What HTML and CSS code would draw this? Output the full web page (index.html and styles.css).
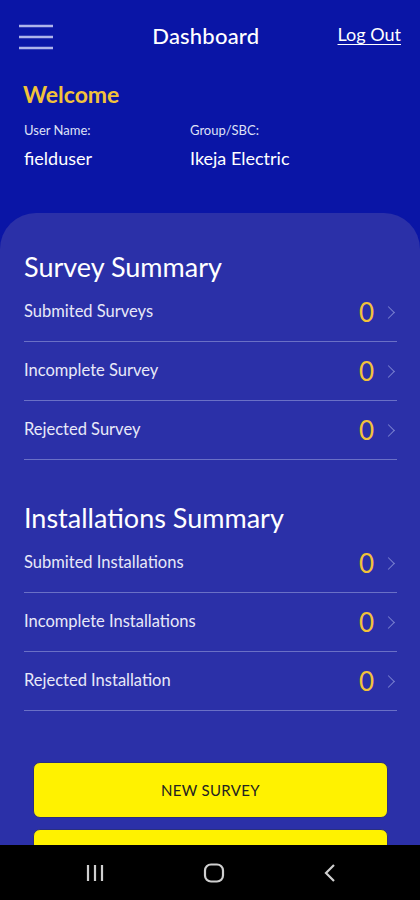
FILE: index.html
```html
<!DOCTYPE html>
<html lang="en">
<head>
    <meta charset="UTF-8">
    <meta name="viewport" content="width=device-width, initial-scale=1.0">
    <title>Dashboard</title>
    <link rel="stylesheet" href="styles.css">
</head>
<body>
    <header class="topbar">
        <button class="menu" aria-label="Menu">
            <svg width="36" height="26" viewBox="0 0 36 26"><g stroke="#aeb3ea" stroke-width="2.4"><line x1="1" y1="2" x2="35" y2="2"/><line x1="1" y1="13" x2="35" y2="13"/><line x1="1" y1="24" x2="35" y2="24"/></g></svg>
        </button>
        <h1>Dashboard</h1>
        <a class="logout" href="#">Log Out</a>
    </header>

    <section class="welcome">
        <h2>Welcome</h2>
        <div class="info">
            <div>
                <span class="label">User Name:</span>
                <span class="value">fielduser</span>
            </div>
            <div>
                <span class="label">Group/SBC:</span>
                <span class="value">Ikeja Electric</span>
            </div>
        </div>
    </section>

    <main class="card">
        <h3>Survey Summary</h3>
        <ul class="summary">
            <li><span>Submited Surveys</span><b>0</b><i class="chev"></i></li>
            <li><span>Incomplete Survey</span><b>0</b><i class="chev"></i></li>
            <li><span>Rejected Survey</span><b>0</b><i class="chev"></i></li>
        </ul>

        <h3>Installations Summary</h3>
        <ul class="summary">
            <li><span>Submited Installations</span><b>0</b><i class="chev"></i></li>
            <li><span>Incomplete Installations</span><b>0</b><i class="chev"></i></li>
            <li><span>Rejected Installation</span><b>0</b><i class="chev"></i></li>
        </ul>

        <div class="actions">
            <button class="btn">NEW SURVEY</button>
            <button class="btn">NEW INSTALLATION</button>
        </div>
    </main>

    <nav class="sysnav">
        <svg width="20" height="18" viewBox="0 0 20 18"><g stroke="#cfcfcf" stroke-width="2.2"><line x1="3" y1="1" x2="3" y2="17"/><line x1="10" y1="1" x2="10" y2="17"/><line x1="17" y1="1" x2="17" y2="17"/></g></svg>
        <svg width="22" height="20" viewBox="0 0 22 20"><rect x="2" y="1.5" width="18" height="17" rx="6" fill="none" stroke="#cfcfcf" stroke-width="2.2"/></svg>
        <svg width="16" height="20" viewBox="0 0 16 20"><polyline points="12,2 4,10 12,18" fill="none" stroke="#cfcfcf" stroke-width="2.2"/></svg>
    </nav>
</body>
</html>
```

FILE: styles.css
```css
body { margin: 0; background: #0a15a6; font-family: "Lato", "Open Sans", sans-serif; color: #fff; height: 900px; overflow: hidden; }
.topbar { display: flex; align-items: center; justify-content: space-between; padding: 20px 18px 0 18px; height: 30px; }
.menu { background: none; border: none; padding: 0; width: 36px; height: 26px; margin-top: 4px; }
.menu svg { display: block; }
.topbar h1 { margin: 0 0 0 20px; font-size: 22px; font-weight: 500; letter-spacing: 0.2px; }
.logout { color: #fff; font-size: 18px; text-decoration: underline; text-underline-offset: 3px; margin-right: 1px; margin-top: -2px; }
.welcome { padding: 30px 24px 0 24px; height: 163px; box-sizing: border-box; }
.welcome h2 { margin: 0 0 14px -1px; color: #f2c23a; font-size: 23px; font-weight: 700; }
.info { display: flex; }
.info > div { display: flex; flex-direction: column; width: 166px; }
.label { font-size: 13px; color: #dfe1f6; }
.value { font-size: 18px; margin-top: 9px; }
.card { background: #2b30a8; border-radius: 36px 36px 0 0; padding: 36px 23px 0 24px; height: 687px; }
.card h3 { margin: 0; font-size: 27px; font-weight: 400; line-height: 36px; }
.summary { list-style: none; margin: -2px 0 40px 0; padding: 0; }
.summary li { display: flex; align-items: center; height: 58px; border-bottom: 1.5px solid #6a70c6; }
.summary li span { flex: 1; font-size: 16.5px; color: #e8e9f8; padding-bottom: 3px; }
.summary li b { color: #f2c23a; font-size: 26px; font-weight: 400; margin-right: 10px; }
.chev { width: 8px; height: 8px; border-top: 1.5px solid #7a80d0; border-right: 1.5px solid #7a80d0; transform: rotate(45deg); margin-right: 4px; }
.actions { padding: 11px 9px 0 9px; display: flex; flex-direction: column; gap: 11px; }
.btn { height: 56px; background: #fff200; border: 1px solid #2a2f80; border-radius: 7px; font-family: inherit; font-size: 15px; color: #222; letter-spacing: 0.3px; }
.sysnav { position: fixed; left: 0; right: 0; bottom: 0; height: 55px; background: #000; display: flex; align-items: center; justify-content: space-between; padding: 0 82px 0 85px; }
```
